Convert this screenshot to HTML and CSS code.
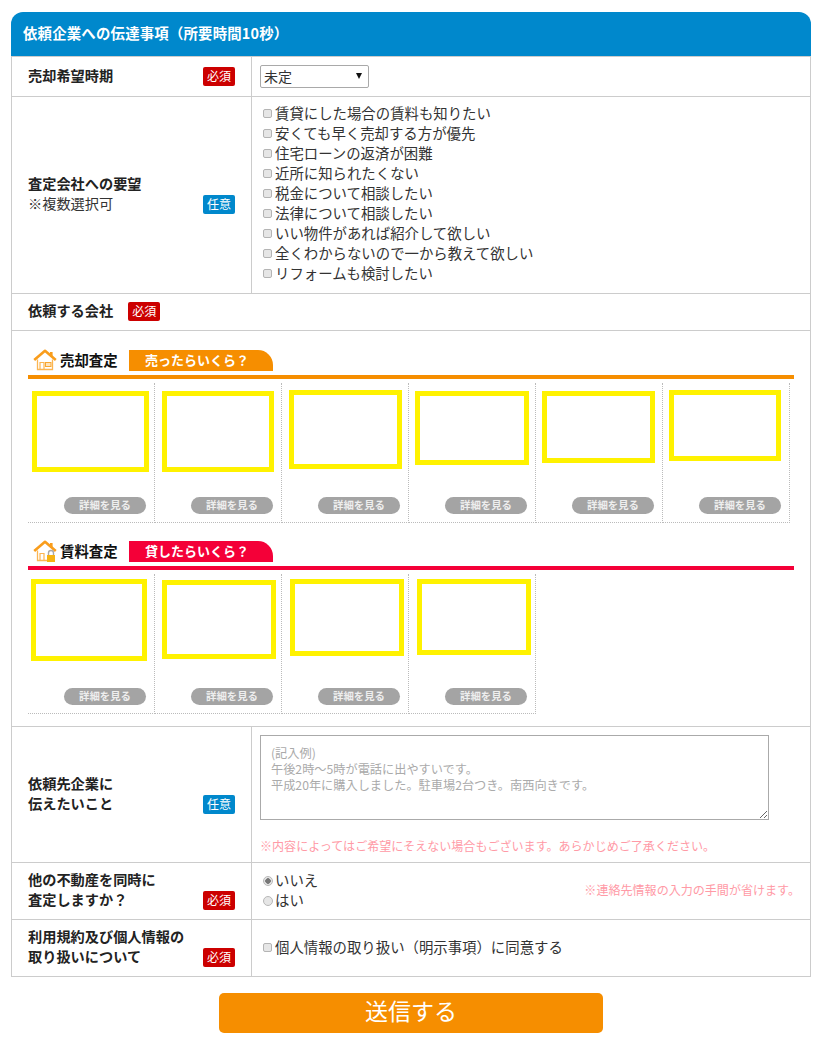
FILE: index.html
```html
<!DOCTYPE html>
<html lang="ja">
<head>
  <meta charset="UTF-8" />
  <title>依頼企業への伝達事項</title>
  <link rel="stylesheet" href="styles.css">
</head>
<body>
  <form class="form-box">
    <h2 class="form-title">依頼企業への伝達事項（所要時間10秒）</h2>

    <div class="row row-first">
      <div class="label"><div class="label-inner"><div class="label-text"><b>売却希望時期</b></div><span class="badge must">必須</span></div></div>
      <div class="field field-select">
        <span class="select-wrap">
          <select><option>未定</option></select>
        </span>
      </div>
    </div>

    <div class="row">
      <div class="label"><div class="label-inner"><div class="label-text"><b>査定会社への要望</b><br>※複数選択可</div><span class="badge free">任意</span></div></div>
      <div class="field field-checks">
        <label class="opt"><input type="checkbox">賃貸にした場合の賃料も知りたい</label>
        <label class="opt"><input type="checkbox">安くても早く売却する方が優先</label>
        <label class="opt"><input type="checkbox">住宅ローンの返済が困難</label>
        <label class="opt"><input type="checkbox">近所に知られたくない</label>
        <label class="opt"><input type="checkbox">税金について相談したい</label>
        <label class="opt"><input type="checkbox">法律について相談したい</label>
        <label class="opt"><input type="checkbox">いい物件があれば紹介して欲しい</label>
        <label class="opt"><input type="checkbox">全くわからないので一から教えて欲しい</label>
        <label class="opt"><input type="checkbox">リフォームも検討したい</label>
      </div>
    </div>

    <div class="row row-wide">
      <div class="label label-wide"><div class="label-inner"><div class="label-text"><b>依頼する会社</b></div><span class="badge must">必須</span></div></div>
    </div>

    <div class="row row-wide">
      <div class="companies">
        <div class="sec-head sec-sale">
          <svg class="sec-icon" width="24" height="22" viewBox="0 0 24 22">
            <path d="M4.5 10.5V20.5H19.5V10.5" fill="none" stroke="#fbb552" stroke-width="1.3"/>
            <path d="M7 20.5V13.5H11V20.5" fill="none" stroke="#fbb552" stroke-width="1.2"/>
            <rect x="12.5" y="13.5" width="5.5" height="4" fill="#fde3bd" stroke="#f9a72f" stroke-width="1"/>
            <rect x="17" y="3" width="2.6" height="5" fill="#f99d1c"/>
            <path d="M1.2 11L12 1.8L22.8 11" fill="none" stroke="#f99d1c" stroke-width="2.6" stroke-linejoin="round"/>
          </svg>
          <span class="sec-name">売却査定</span>
          <span class="sec-tab">売ったらいくら？</span>
        </div>
        <div class="cells">
          <div class="cell"><div class="logo" style="width:117px;height:81px;margin:8px 0 0 4px"></div><a class="more">詳細を見る</a></div>
          <div class="cell"><div class="logo" style="width:112px;height:81px;margin:8px 0 0 7px"></div><a class="more">詳細を見る</a></div>
          <div class="cell"><div class="logo" style="width:113px;height:79px;margin:7px 0 0 7px"></div><a class="more">詳細を見る</a></div>
          <div class="cell"><div class="logo" style="width:114px;height:74px;margin:8px 0 0 6px"></div><a class="more">詳細を見る</a></div>
          <div class="cell"><div class="logo" style="width:113px;height:72px;margin:8px 0 0 6px"></div><a class="more">詳細を見る</a></div>
          <div class="cell"><div class="logo" style="width:112px;height:71px;margin:7px 0 0 6px"></div><a class="more">詳細を見る</a></div>
        </div>

        <div class="sec-head sec-rent">
          <svg class="sec-icon" width="24" height="22" viewBox="0 0 24 22">
            <path d="M4.5 10.5V20.5H14" fill="none" stroke="#fbb552" stroke-width="1.3"/>
            <path d="M7 20.5V13.5H11V20.5" fill="none" stroke="#fbb552" stroke-width="1.2"/>
            <rect x="17" y="3" width="2.6" height="5" fill="#f99d1c"/>
            <path d="M1.2 11L12 1.8L22.8 11" fill="none" stroke="#f99d1c" stroke-width="2.6" stroke-linejoin="round"/>
            <path d="M15.5 15V13a2.5 2.5 0 0 1 5 0V15" fill="none" stroke="#a8a8a8" stroke-width="1.4"/>
            <rect x="14" y="15" width="8" height="7" fill="#f6b312"/>
          </svg>
          <span class="sec-name">賃料査定</span>
          <span class="sec-tab">貸したらいくら？</span>
        </div>
        <div class="cells">
          <div class="cell"><div class="logo" style="width:116px;height:82px;margin:5px 0 0 3px"></div><a class="more">詳細を見る</a></div>
          <div class="cell"><div class="logo" style="width:114px;height:79px;margin:6px 0 0 7px"></div><a class="more">詳細を見る</a></div>
          <div class="cell"><div class="logo" style="width:114px;height:77px;margin:5px 0 0 8px"></div><a class="more">詳細を見る</a></div>
          <div class="cell"><div class="logo" style="width:114px;height:76px;margin:5px 0 0 8px"></div><a class="more">詳細を見る</a></div>
        </div>
      </div>
    </div>

    <div class="row">
      <div class="label"><div class="label-inner"><div class="label-text"><b>依頼先企業に<br>伝えたいこと</b></div><span class="badge free">任意</span></div></div>
      <div class="field field-message">
        <textarea placeholder="(記入例)&#10;午後2時～5時が電話に出やすいです。&#10;平成20年に購入しました。駐車場2台つき。南西向きです。"></textarea>
        <p class="note note-message">※内容によってはご希望にそえない場合もございます。あらかじめご了承ください。</p>
      </div>
    </div>

    <div class="row">
      <div class="label"><div class="label-inner"><div class="label-text"><b>他の不動産を同時に<br>査定しますか？</b></div><span class="badge must">必須</span></div></div>
      <div class="field field-radios">
        <div>
          <label class="opt opt-radio"><input type="radio" name="other" checked>いいえ</label>
          <label class="opt opt-radio"><input type="radio" name="other">はい</label>
        </div>
        <p class="note">※連絡先情報の入力の手間が省けます。</p>
      </div>
    </div>

    <div class="row">
      <div class="label"><div class="label-inner"><div class="label-text"><b>利用規約及び個人情報の<br>取り扱いについて</b></div><span class="badge must">必須</span></div></div>
      <div class="field field-agree">
        <label class="opt"><input type="checkbox">個人情報の取り扱い（明示事項）に同意する</label>
      </div>
    </div>

    <div class="submit-wrap"><button type="button" class="btn-send">送信する</button></div>
  </form>
</body>
</html>
```

FILE: styles.css
```css
:root{
  --blue:#0088cc;
  --red:#cc0000;
  --orange:#f68e00;
  --rose:#f40038;
  --line:#cccccc;
  --pink:#ff9aa6;
  --text:#333333;
}
*{box-sizing:border-box}
body{margin:0;font-family:"Noto Sans CJK JP","Noto Sans",sans-serif;font-size:14.2px;line-height:20px;color:var(--text);background:#fff}
.form-box{width:800px;margin:12px 0 0 11px}
.form-title{margin:0;height:44px;padding:0 12px;background:var(--blue);border-radius:12px 12px 0 0;color:#fff;font-size:14.4px;font-weight:700;letter-spacing:.2px;line-height:41px}

.row{display:grid;grid-template-columns:240px 1fr;border:1px solid var(--line);border-top:none}
.row-first{border-top:1px solid var(--line)}
.row-wide{grid-template-columns:1fr}
.label{display:flex;align-items:center;padding:7px 16px 9px;border-right:1px solid var(--line)}
.label b{color:#222;font-weight:700}
.label-inner{display:flex;align-items:flex-end;justify-content:space-between;width:100%}
.label-text{margin:-1px 0 1px}
.label-wide{border-right:none}
.label-wide .label-inner{justify-content:flex-start;gap:15px}
.badge{display:block;flex:none;width:32px;height:19px;border-radius:2px;color:#fff;font-size:12px;line-height:18px;text-align:center}
.must{background:var(--red)}
.free{background:var(--blue)}

.field{padding-left:8px}
.field-select{padding-top:8px;padding-bottom:8px}
.select-wrap{display:block;position:relative;width:109px;height:23px}
.select-wrap select{display:block;width:100%;height:100%;appearance:none;-webkit-appearance:none;padding:0 3px 2px;border:1px solid #a9a9a9;border-radius:2px;background:#fff;font:14px "Noto Sans CJK JP",sans-serif;color:var(--text)}
.select-wrap::after{content:"";position:absolute;right:7px;top:8px;border-style:solid;border-width:6px 3px 0;border-color:#111 transparent transparent}

.field-checks{padding-top:6px;padding-bottom:10px}
.opt{display:flex;align-items:center;height:20px;font-size:14.4px;color:var(--text)}
.opt input{appearance:none;-webkit-appearance:none;width:9px;height:9px;margin:1px 3px 0;border:1px solid #b4b4b4;border-radius:2px;background:#e6e6e6}
.opt-radio input{width:10px;height:10px;margin-right:2px;border-radius:50%;border-color:#b8b8b8}
.opt-radio input:checked{background:radial-gradient(circle,#777 0 2.5px,#e6e6e6 3px)}

.companies{padding:19px 16px 12px}
.sec-head{display:flex;align-items:flex-end;height:29px;padding-bottom:4px;border-bottom:4px solid}
.sec-sale{border-color:var(--orange)}
.sec-rent{border-color:var(--rose);margin-top:18px}
.sec-icon{margin:0 3px 0 5px;flex:none}
.sec-name{width:69px;padding-bottom:1px;font-size:14.4px;font-weight:700;color:#111;line-height:20px}
.sec-tab{width:144px;height:21px;padding-left:16px;border-radius:0 15px 0 0;color:#fff;font-size:13px;font-weight:700;line-height:19px}
.sec-sale .sec-tab{background:var(--orange)}
.sec-rent .sec-tab{background:var(--rose)}

.cells{display:grid;grid-template-columns:repeat(6,127px);margin-top:4px}
.cell{display:flex;flex-direction:column;height:140px;border-right:1px dotted #bbb;border-bottom:1px dotted #bbb}
.logo{flex:none;border:5px solid #fff200;background:#fff}
.more{display:block;align-self:flex-end;margin:auto 8px 8px 0;width:82px;height:17px;border-radius:9px;background:#a4a4a4;color:#eee;font-size:10.4px;font-weight:700;line-height:16px;text-align:center}

.field-message{padding-top:8px;padding-bottom:6px}
textarea{display:block;width:509px;height:85px;padding:9px 10px;border:1px solid #aaa;border-radius:0;font:12.2px/16px "Noto Sans CJK JP",sans-serif;color:var(--text)}
textarea::placeholder{color:#aaa;opacity:1}
.note{margin:0;color:var(--pink);font-size:12.05px;line-height:20px}
.note-message{margin-top:16px}

.field-radios{display:flex;align-items:center;justify-content:space-between;padding-top:7px;padding-bottom:9px;padding-right:10px}
.field-agree{display:flex;align-items:center;padding-bottom:2px}

.submit-wrap{display:flex;justify-content:center;margin-top:16px}
.btn-send{width:384px;height:40px;padding:0 0 6px;border:none;border-radius:5px;background:var(--orange);color:#fff;font:23.04px "Noto Sans CJK JP",sans-serif;cursor:pointer}
```
